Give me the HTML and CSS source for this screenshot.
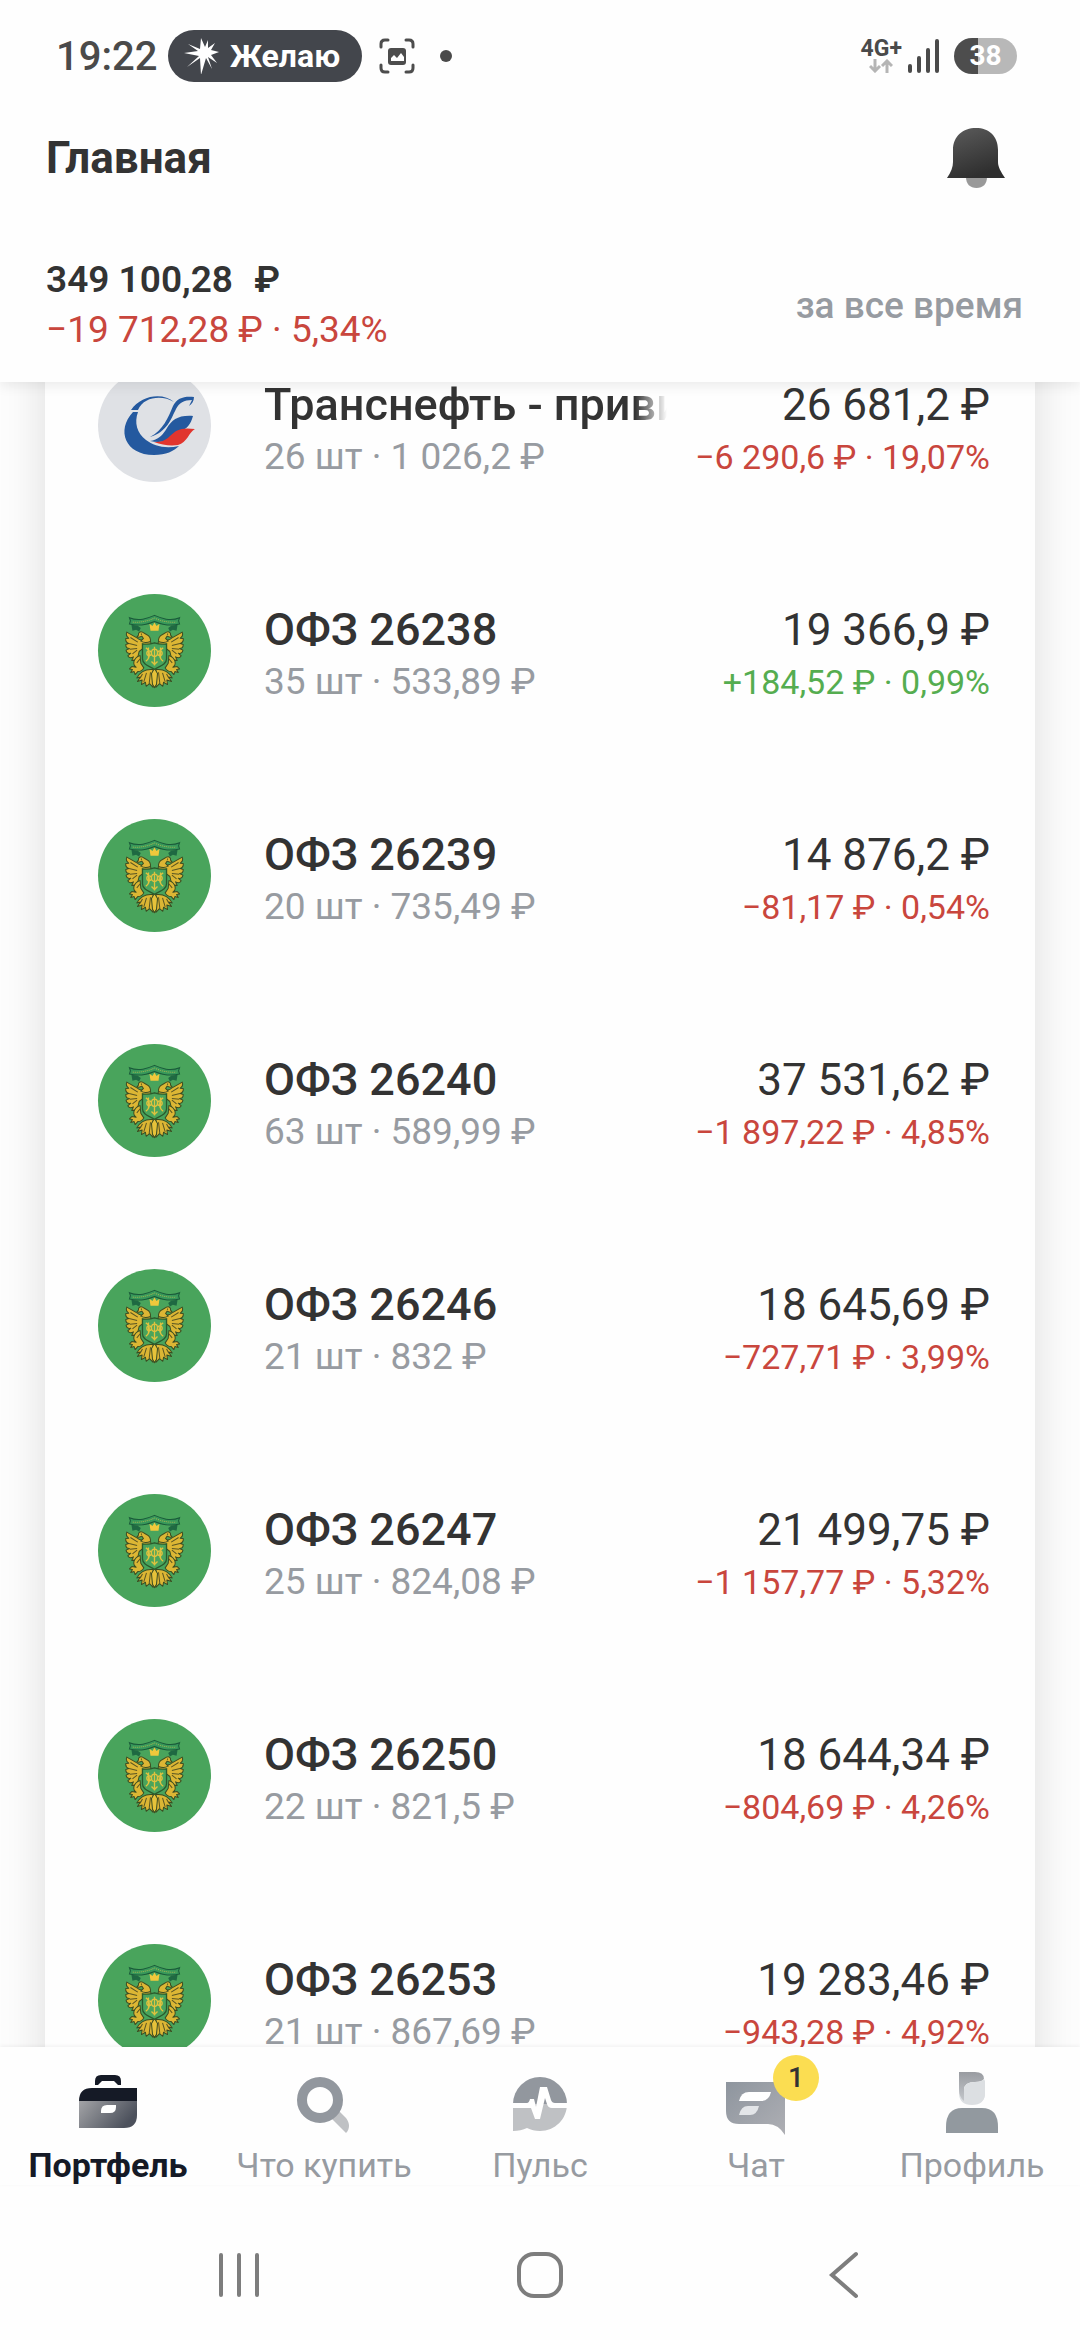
FILE: index.html
```html
<!DOCTYPE html>
<html lang="ru">
<head>
    <meta charset="UTF-8">
    <meta name="viewport" content="width=device-width, initial-scale=1.0">
    <title>Главная</title>
    <link rel="stylesheet" href="styles.css">
</head>
<body>
    <!-- Shared artwork -->
    <svg class="defs" aria-hidden="true">
        <defs>
            <linearGradient id="bell-fill" x1="0" y1="0" x2="0.4" y2="1">
                <stop offset="0" stop-color="#5c5c5c"/>
                <stop offset="1" stop-color="#2f2f2f"/>
            </linearGradient>
            <linearGradient id="case-fill" x1="0" y1="0" x2="1" y2="0.4">
                <stop offset="0" stop-color="#a3a4a7"/>
                <stop offset="1" stop-color="#4c515c"/>
            </linearGradient>
            <linearGradient id="chat-fill" x1="0" y1="0" x2="1" y2="1">
                <stop offset="0" stop-color="#8e959e"/>
                <stop offset="1" stop-color="#aeafb4"/>
            </linearGradient>
            <linearGradient id="hair-fill" x1="0" y1="0" x2="0" y2="1">
                <stop offset="0" stop-color="#999ca1"/>
                <stop offset="1" stop-color="#c3c6ca"/>
            </linearGradient>
        </defs>
        <symbol id="emblem-wing" viewBox="54 42 338 338">
            <g fill="#dcb634" stroke="#3b4d22" stroke-width="3" stroke-linejoin="round">
                <path d="M212 186c-14-6-27-3-36-9-10-7-22-13-36-21-3 8 0 14 6 18l-9 1c-1 8 3 13 9 15l-9 3c0 8 4 12 11 12l-10 5c1 8 7 11 14 9l-9 8c4 7 11 7 17 3l-5 11c8 1 14-3 18-10l4-17 10-8 25-4z"/>
                <path d="M211 184c1-12-3-17-12-21l-12-7c-8-3-13 2-12 9l-5 6c6 2 10 0 15-3l5 7-8 8c9 5 19 5 29 1z"/>
                <path d="M180 226c-10 2-19 12-19 23 0 6 3 10 7 12l-13-2-7 7 9 2-5 9 10-3 3 9 8-9c9 0 15-5 18-11l-9-14z"/>
                <path d="M219 268c-24-3-40 9-49 25l11-3-9 14 14-5-2 14 12-7 2 12 10-8 11 11z"/>
            </g>
            <path d="M151 172l22 14M147 190l24 6M149 207l22-2M157 221l14-11M170 248l11-13M187 281l-7 13M199 278l-8 27M211 276l-4 34" fill="none" stroke="#5a5523" stroke-width="3"/>
            <circle cx="184" cy="162" r="2" fill="#2b3f20"/>
            <path d="M154 134l19 3 9 7-5 10-9-5-11 3z" fill="#1f6942"/>
        </symbol>
        <symbol id="emblem" viewBox="54 42 338 338">
            <use href="#emblem-wing" x="54" y="42" width="338" height="338"/>
            <g transform="matrix(-1 0 0 1 446 0)"><use href="#emblem-wing" x="54" y="42" width="338" height="338"/></g>
            <path d="M223 264l9 16-3 32-6 10-6-10-3-32z" fill="#e6c23a" stroke="#3b4d22" stroke-width="3"/>
            <path d="M211 152l-3-21 9 7 6-11 6 11 9-7-3 21z" fill="#f0c83c"/>
            <path d="M187 191q18 3 36-3 18 6 36 3v45c0 17-19 21-36 31-17-10-36-14-36-31z" fill="#49a45c" stroke="#2b5a2c" stroke-width="4"/>
            <g fill="none" stroke="#e0c23e" stroke-width="4">
                <path d="M223 200v56M205 202v34M241 202v34M197 203c14 8 14 30 0 40M249 203c-14 8-14 30 0 40M214 244l9 9 9-9"/>
                <ellipse cx="223" cy="218" rx="9" ry="11"/>
                <circle cx="207" cy="219" r="7"/>
                <circle cx="239" cy="219" r="7"/>
            </g>
            <path d="M148 113c28 12 54 2 75-7 21 9 47 19 75 7l-3 9 3 10c-28 7-54 1-75-8-21 9-47 15-75 8l3-10z" fill="#37985a" stroke="#1a5a3a" stroke-width="3"/>
            <path d="M158 126c22 2 45-3 65-12 20 9 43 14 65 12" fill="none" stroke="#a9b850" stroke-width="3" stroke-dasharray="3 3"/>
        </symbol>
        <symbol id="transneft" viewBox="0 0 113 113">
            <path d="M35 43C18 61 27 86 56 86c12 0 20-4 25-9-14 3-25 0-33-6-9-7-12-17-8-28z" fill="#24599f"/>
            <path d="M33 41c10-15 32-18 43-8-11-7-30-6-36 8z" fill="#24599f"/>
            <path d="M96 28c-10-1-17 1-21 9-5 12-10 24-23 31 17-5 21-18 26-28 3-6 8-9 16-9l-3 6c3-2 5-5 5-9z" fill="#24599f"/>
            <path d="M95 47c-15-1-21 4-26 12-4 7-9 12-17 13 9 2 17 1 22-4 7-9 16-3 21-21z" fill="#24599f"/>
            <path d="M97 60c-14-2-19 1-25 7-5 5-9 6-16 6 8 3 16 4 24 3 9-2 11-13 17-16z" fill="#e1352e"/>
        </symbol>
    </svg>

    <div class="screen">
        <div class="status-bar">
            <span class="clock">19:22</span>
            <span class="pill">
                <svg width="36" height="36" viewBox="0 0 36 36"><path d="M17 0l4 9 3-7v8l7-5-4 7 8 2-8 3 6 8-9-6 4 12-6-11-5 17-1-17L3 29l12-11L0 15l14-2L4 6l12 5z" fill="#fff"/></svg>
                <b>Желаю</b>
            </span>
            <svg class="capture" width="36" height="36" viewBox="0 0 36 36">
                <path d="M2 9V6q0-4 4-4h3M27 2h3q4 0 4 4v3M34 27v3q0 4-4 4h-3M9 34H6q-4 0-4-4v-3" fill="none" stroke="#4d4d4d" stroke-width="3" stroke-linecap="round"/>
                <rect x="9" y="10" width="18" height="17" rx="3" fill="#4d4d4d"/>
                <path d="M12 23v-3l3-3 3 3 4-5 3 4v4z" fill="#fff"/>
            </svg>
            <span class="dot"></span>
            <span class="spacer"></span>
            <span class="network">
                <span>4G+</span>
                <svg width="24" height="14" viewBox="0 0 24 14"><path d="M6 0v12M1 7l5 5 5-5M18 14V2M13 7l5-5 5 5" fill="none" stroke="#b5b5b5" stroke-width="3"/></svg>
            </span>
            <svg width="32" height="34" viewBox="0 0 32 34"><path d="M2 27v5M11 19v13M20 11v21M29 2v30" stroke="#4a4a4a" stroke-width="4" stroke-linecap="round"/></svg>
            <span class="battery">38</span>
        </div>

        <header class="header">
            <div class="title-row">
                <h1>Главная</h1>
                <button class="bell" aria-label="Уведомления">
                    <svg width="60" height="60" viewBox="0 0 60 60">
                        <path d="M20 49h21c0 7-4 11-10.500 11S20 56 20 49z" fill="#999"/>
                        <path d="M7 22C7 8 17 0 30 0s22 8 22 22v12c0 5 3 10 7 16H1c4-6 6-11 6-16z" fill="url(#bell-fill)"/>
                    </svg>
                </button>
            </div>
            <div class="summary">
                <div>
                    <p class="total">349 100,28 <span>₽</span></p>
                    <p class="loss">−19 712,28 ₽ · 5,34%</p>
                </div>
                <button class="period">за все время</button>
            </div>
        </header>

        <main class="content">
            <ul class="card">
                <li class="row">
                    <svg class="logo logo-grey"><use href="#transneft"/></svg>
                    <div class="info">
                        <h2 class="cut">Транснефть - приви</h2>
                        <p>26 шт · 1 026,2 ₽</p>
                    </div>
                    <div class="value">
                        <strong>26 681,2 ₽</strong>
                        <span class="loss">−6 290,6 ₽ · 19,07%</span>
                    </div>
                </li>
                <li class="row">
                    <svg class="logo"><use href="#emblem"/></svg>
                    <div class="info">
                        <h2>ОФЗ 26238</h2>
                        <p>35 шт · 533,89 ₽</p>
                    </div>
                    <div class="value">
                        <strong>19 366,9 ₽</strong>
                        <span class="gain">+184,52 ₽ · 0,99%</span>
                    </div>
                </li>
                <li class="row">
                    <svg class="logo"><use href="#emblem"/></svg>
                    <div class="info">
                        <h2>ОФЗ 26239</h2>
                        <p>20 шт · 735,49 ₽</p>
                    </div>
                    <div class="value">
                        <strong>14 876,2 ₽</strong>
                        <span class="loss">−81,17 ₽ · 0,54%</span>
                    </div>
                </li>
                <li class="row">
                    <svg class="logo"><use href="#emblem"/></svg>
                    <div class="info">
                        <h2>ОФЗ 26240</h2>
                        <p>63 шт · 589,99 ₽</p>
                    </div>
                    <div class="value">
                        <strong>37 531,62 ₽</strong>
                        <span class="loss">−1 897,22 ₽ · 4,85%</span>
                    </div>
                </li>
                <li class="row">
                    <svg class="logo"><use href="#emblem"/></svg>
                    <div class="info">
                        <h2>ОФЗ 26246</h2>
                        <p>21 шт · 832 ₽</p>
                    </div>
                    <div class="value">
                        <strong>18 645,69 ₽</strong>
                        <span class="loss">−727,71 ₽ · 3,99%</span>
                    </div>
                </li>
                <li class="row">
                    <svg class="logo"><use href="#emblem"/></svg>
                    <div class="info">
                        <h2>ОФЗ 26247</h2>
                        <p>25 шт · 824,08 ₽</p>
                    </div>
                    <div class="value">
                        <strong>21 499,75 ₽</strong>
                        <span class="loss">−1 157,77 ₽ · 5,32%</span>
                    </div>
                </li>
                <li class="row">
                    <svg class="logo"><use href="#emblem"/></svg>
                    <div class="info">
                        <h2>ОФЗ 26250</h2>
                        <p>22 шт · 821,5 ₽</p>
                    </div>
                    <div class="value">
                        <strong>18 644,34 ₽</strong>
                        <span class="loss">−804,69 ₽ · 4,26%</span>
                    </div>
                </li>
                <li class="row">
                    <svg class="logo"><use href="#emblem"/></svg>
                    <div class="info">
                        <h2>ОФЗ 26253</h2>
                        <p>21 шт · 867,69 ₽</p>
                    </div>
                    <div class="value">
                        <strong>19 283,46 ₽</strong>
                        <span class="loss">−943,28 ₽ · 4,92%</span>
                    </div>
                </li>
            </ul>
        </main>

        <nav class="tabs">
            <a href="#" class="tab active">
                <svg width="60" height="60" viewBox="0 0 60 60">
                    <path d="M17 11V7q0-6 6-6h14q6 0 6 6v4h-3l-4-4H24l-4 4z" fill="#151a26"/>
                    <path d="M1 27q0-13 13-13h45v13z" fill="#151a26"/>
                    <path d="M1 27h58v14q0 13-13 13H1z" fill="url(#case-fill)"/>
                    <path d="M23 39v-2q0-6 6-6h9v2q0 6-6 6z" fill="#fff"/>
                </svg>
                <span>Портфель</span>
            </a>
            <a href="#" class="tab">
                <svg width="60" height="60" viewBox="0 0 60 60">
                    <path d="M38 45l7-8 7 7c4 5 4 11 0 15z" fill="#bfc1c4"/>
                    <circle cx="26" cy="26" r="18" fill="none" stroke="#92979e" stroke-width="10"/>
                </svg>
                <span>Что купить</span>
            </a>
            <a href="#" class="tab">
                <svg width="60" height="60" viewBox="0 0 60 60">
                    <path d="M3 30a27 27 0 0 1 54 0z" fill="#92979e"/>
                    <path d="M3 30h54c0 15-12 27-27 27-5 0-9-1-13-3-4 2-9 3-14 3z" fill="#bfc1c4"/>
                    <path d="M0 29h17q2 0 3-4h4l2 8 4-20h7l4 13q1 3 4 3h15v5H42q-4 0-5-4l-2-6-5 21h-5l-4-11H0z" fill="#fff"/>
                </svg>
                <span>Пульс</span>
            </a>
            <a href="#" class="tab">
                <svg width="60" height="60" viewBox="0 0 60 60">
                    <path d="M0 8h59v53q-7-11-17-11H13Q0 50 0 37z" fill="url(#chat-fill)"/>
                    <path d="M13 27q2-9 10-9h22q-2 9-10 9z" fill="#fff"/>
                    <path d="M13 41q2-9 9-9h11q-2 9-9 9z" fill="#e3e5e8"/>
                </svg>
                <i class="badge">1</i>
                <span>Чат</span>
            </a>
            <a href="#" class="tab">
                <svg width="60" height="60" viewBox="0 0 60 60">
                    <path d="M17 15h26v4q0 12-13 12T17 19z" fill="#dcdfe2"/>
                    <path d="M17-2h16q9 0 9 7-2 3-9 3-11 0-11 8v11q-5-4-5-12z" fill="url(#hair-fill)"/>
                    <path d="M22 16q0-8 11-8 7 0 9-3l1 2v12q0 11-13 11-4 0-8-4z" fill="#dcdfe2"/>
                    <path d="M4 59V53Q4 34 20 34h20q16 0 16 19v6z" fill="#92999f"/>
                </svg>
                <span>Профиль</span>
            </a>
        </nav>

        <div class="system-nav">
            <button aria-label="Недавние">
                <svg width="48" height="48" viewBox="0 0 48 48"><path d="M6 4v40M24 4v40M42 4v40" stroke="#7d7d7d" stroke-width="4" stroke-linecap="round"/></svg>
            </button>
            <button aria-label="Домой">
                <svg width="48" height="48" viewBox="0 0 48 48"><rect x="3" y="3" width="42" height="42" rx="15" fill="none" stroke="#7d7d7d" stroke-width="4"/></svg>
            </button>
            <button aria-label="Назад">
                <svg width="48" height="48" viewBox="0 0 48 48"><path d="M39 3L15 24l24 21" fill="none" stroke="#7d7d7d" stroke-width="4" stroke-linecap="round"/></svg>
            </button>
        </div>
    </div>
</body>
</html>
```

FILE: styles.css
```css
* {
    box-sizing: border-box;
}
body {
    margin: 0;
    font-family: Roboto, "Noto Sans", sans-serif;
    color: #333;
    background-color: #fdfdfd;
}
h1, h2, p, ul {
    margin: 0;
    padding: 0;
}
button {
    padding: 0;
    border: none;
    background: none;
    font-family: inherit;
    cursor: pointer;
}
svg {
    display: block;
    flex-shrink: 0;
}
.defs {
    position: absolute;
    width: 0;
    height: 0;
}
.screen {
    display: flex;
    flex-direction: column;
    height: 100vh;
}

/* Status bar */
.status-bar {
    position: relative;
    z-index: 2;
    display: flex;
    align-items: center;
    height: 112px;
    padding: 0 63px 0 56px;
    color: #4a4a4a;
    background-color: #fefefe;
}
.clock {
    width: 112px;
    font-size: 40px;
    font-weight: 500;
}
.pill {
    display: flex;
    align-items: center;
    gap: 10px;
    height: 52px;
    padding: 0 22px 0 16px;
    border-radius: 26px;
    font-size: 32px;
    color: #fff;
    background-color: #43464c;
}
.capture {
    margin: 0 25px 0 17px;
}
.dot {
    width: 12px;
    height: 12px;
    border-radius: 50%;
    background-color: #4a4a4a;
}
.spacer {
    flex: 1;
}
.network {
    display: flex;
    flex-direction: column;
    align-items: center;
    margin-right: 6px;
    font-size: 23px;
    font-weight: 700;
    line-height: 20px;
}
.battery {
    width: 63px;
    margin-left: 14px;
    border-radius: 18px;
    font-size: 28px;
    font-weight: 700;
    line-height: 36px;
    text-align: center;
    color: #fff;
    background: linear-gradient(to right, #4d4d4d 38%, #b8b8b8 38%);
}

/* Header */
.header {
    position: relative;
    z-index: 1;
    padding: 12px 57px 27px 46px;
    background-color: #fefefe;
    box-shadow: 0 4px 12px rgba(0, 0, 0, 0.08);
}
.title-row,
.summary {
    display: flex;
    align-items: center;
    justify-content: space-between;
}
.title-row {
    height: 68px;
    margin-bottom: 63px;
    padding-right: 17px;
}
h1 {
    font-size: 44px;
    font-weight: 700;
}
.total,
.summary .loss {
    font-size: 37px;
    line-height: 50px;
}
.total {
    font-weight: 600;
}
.total span {
    margin-left: 12px;
}
.period {
    font-size: 37px;
    font-weight: 500;
    color: #979ba1;
}
.loss {
    color: #c9463d;
}
.gain {
    color: #55ad50;
}

/* Positions list */
.content {
    flex: 1;
    min-height: 0;
    padding: 0 45px;
    overflow: hidden;
}
.card {
    margin-top: -69px; /* list is scrolled under the header */
    list-style: none;
    background-color: #fefefe;
    box-shadow: 0 0 45px rgba(0, 0, 0, 0.13);
}
.row {
    display: flex;
    align-items: center;
    height: 225px;
    padding: 0 45px 0 53px;
}
.logo {
    width: 113px;
    height: 113px;
    margin-right: 53px;
    border-radius: 50%;
    background-color: #49a45c;
}
.logo-grey {
    background-color: #dfe1e5;
}
.info {
    flex: 1;
    min-width: 0;
    margin-right: 28px;
}
.info h2,
.value strong {
    line-height: 62px;
    white-space: nowrap;
}
.info h2 {
    font-size: 45px;
    font-weight: 500;
}
.info .cut {
    overflow: hidden;
    -webkit-mask-image: linear-gradient(to left, transparent, #000 32px);
    mask-image: linear-gradient(to left, transparent, #000 32px);
}
.info p {
    font-size: 37px;
    line-height: 42px;
    color: #979ba1;
}
.value {
    display: flex;
    flex-direction: column;
    text-align: right;
}
.value strong {
    font-size: 44px;
    font-weight: 400;
}
.value span {
    font-size: 34px;
    line-height: 42px;
}

/* Bottom tabs */
.tabs {
    position: relative;
    display: flex;
    padding: 27px 0 0;
    background-color: #fefefe;
    box-shadow: 0 -1px 4px rgba(0, 0, 0, 0.06);
}
.tab {
    position: relative;
    flex: 1;
    display: flex;
    flex-direction: column;
    align-items: center;
    gap: 11px;
    font-size: 34px;
    line-height: 40px;
    text-decoration: none;
    color: #979ba1;
}
.tab svg {
    overflow: visible;
}
.active {
    font-weight: 700;
    color: #151a26;
}
.badge {
    position: absolute;
    top: -19px;
    left: 50%;
    width: 46px;
    margin-left: 17px;
    border-radius: 50%;
    font-size: 28px;
    font-style: normal;
    font-weight: 500;
    line-height: 46px;
    text-align: center;
    color: #333;
    background-color: #fbdd51;
}

/* System navigation */
.system-nav {
    display: flex;
    padding: 66px 88px 41px;
    background-color: #fefefe;
}
.system-nav button {
    flex: 1;
    display: flex;
    justify-content: center;
}
```
